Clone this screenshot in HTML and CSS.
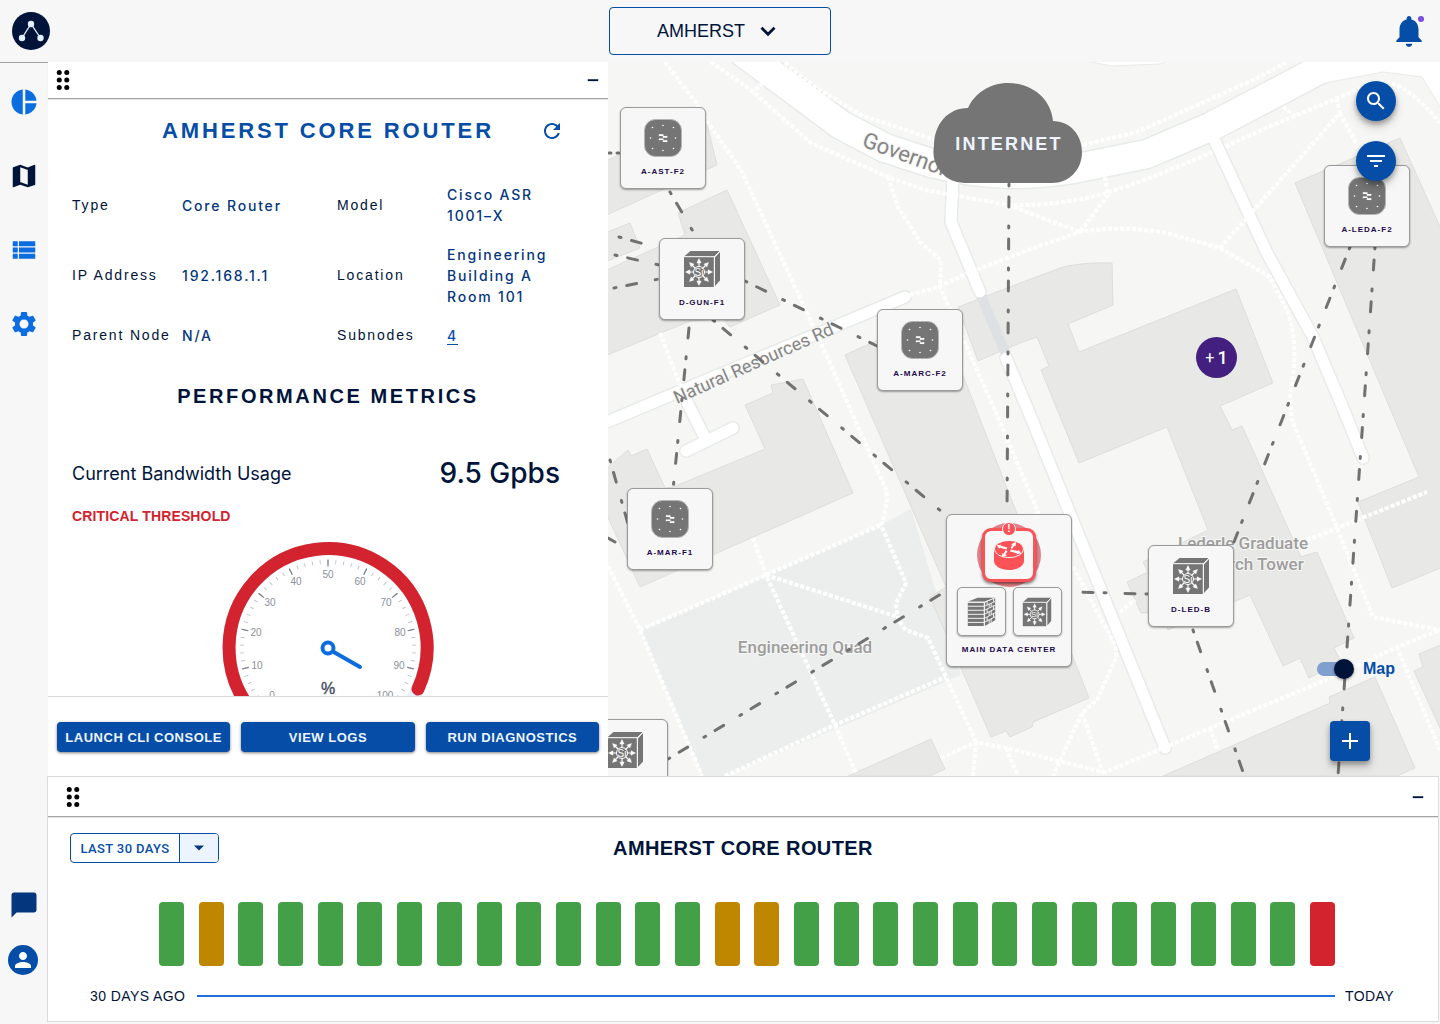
FILE: index.html
```html
<!DOCTYPE html>
<html lang="en">
<head>
<meta charset="utf-8">
<meta name="viewport" content="width=device-width, initial-scale=1">
<title>Amherst network map</title>
<link rel="stylesheet" href="styles.css">
</head>
<body>
<svg class="sprite" aria-hidden="true">
  <symbol id="drag" viewBox="0 0 24 24"><circle cx="9" cy="6" r="2"/><circle cx="15" cy="6" r="2"/><circle cx="9" cy="12" r="2"/><circle cx="15" cy="12" r="2"/><circle cx="9" cy="18" r="2"/><circle cx="15" cy="18" r="2"/></symbol>
  <symbol id="minus" viewBox="0 0 24 24"><path d="M5 11h14v2.500H5z"/></symbol>
  <symbol id="access" viewBox="0 0 38 38">
    <rect x="0.500" y="0.500" width="37" height="37" rx="11" fill="#757575" stroke="#b5b5b5"/>
    <g fill="#fff"><circle cx="19" cy="6.500" r=".8"/><circle cx="19" cy="31.500" r=".8"/><circle cx="6.500" cy="19" r=".8"/><circle cx="31.500" cy="19" r=".8"/><circle cx="8.500" cy="8.500" r=".8"/><circle cx="29.500" cy="8.500" r=".8"/><circle cx="8.500" cy="29.500" r=".8"/><circle cx="29.500" cy="29.500" r=".8"/>
    <path d="M14.500 16l1.500-1.200v.5h3.500v1.600h-3.500v.6zM14.500 20.200l1.500-1.200v.5h3.500v1.600h-3.500v.6zM23.800 17.800l-1.500-1.200v.5h-3.500v1.600h3.500v.6zM23.800 22l-1.500-1.200v.5h-3.500v1.600h3.500v.6z"/></g>
  </symbol>
  <symbol id="layer3" viewBox="-1 -1 38 38">
    <path d="M0 5.500L6.500 0H36l-5.500 5.500z M31 6.500L36 1v28.500L31 35z" fill="#757575"/>
    <path d="M0 6h30v30H0z" fill="#757575"/>
    <path d="M0 5.700h30.300V36M30.300 5.700L36 0" fill="none" stroke="#f7f7f8"/>
    <g fill="#fff" stroke="#fff">
      <path d="M15 11v20M5 21h20M8 14l14 14M22 14L8 28" stroke-width="1.200"/>
      <path d="M15 7.500l2.200 4.500h-4.400zM15 34.500l2.200-4.500h-4.400zM1.500 21l4.500-2.200v4.400zM28.500 21l-4.500-2.200v4.400zM5.500 11.500l4.600 1.600-3 3zM24.500 11.500l-1.600 4.600-3-3zM5.500 30.500l1.600-4.600 3 3zM24.500 30.500l-4.600-1.600 3-3z" stroke-width=".4"/>
    </g>
    <circle cx="15" cy="21" r="5.500" fill="#757575" stroke="#fff"/>
    <text x="15" y="24.500" text-anchor="middle" class="si">Si</text>
  </symbol>
  <symbol id="firewall" viewBox="0 0 36 36">
    <path d="M1 6L13 1h22L22 6z M1 7h20v29H1z M22 7l13-6v28L22 36z" fill="#757575"/>
    <path d="M1 6.500h20.500M1 11.500h20.500M1 16.500h20.500M1 21.500h20.500M1 26.500h20.500M1 31.500h20.500M21.500 6.500V36M21.500 6.500L35 1M21.500 11.500L35 5.500M21.500 16.500L35 10M21.500 21.500L35 14.500M21.500 26.500L35 19.500M21.500 31.500L35 24.500M25 5.500v4.500M30 8v4M25 15v4.500M30 17v4.500M25 25v4.500M30 27v4.500M33 2v4M27.500 9v4M33 11v4.500M27.500 18v5M33 21v4.500M27.500 28v5" stroke="#f7f7f8" stroke-width="1.200" fill="none"/>
  </symbol>
  <symbol id="router" viewBox="0 0 30 30">
    <path d="M0 9v12c0 5 7 9 15 9s15-4 15-9V9z" fill="#fb5258"/>
    <ellipse cx="15" cy="9" rx="14.600" ry="8.600" fill="#fb5258" stroke="#f7f7f8"/>
    <g fill="#fff"><path d="M12.500 9.500L6 7.700l-.8 1L2.800 5.200 7.500 4.700l-.8 1 6.600 1.800zM16.500 8l2-3.300-1.500-.5 5-2.200-.3 4.200-1.400-.5-2 3zM13.500 11l-2 3.700 1.500.5-5 2 .2-4 1.400.5 1.900-3.500zM16.800 9.500l7.200 1.600.7-1 2.600 3.500-5 .7.700-1-7-1.700z"/></g>
  </symbol>
</svg>

<header class="topbar">
  <a class="logo" href="#" aria-label="Home"><svg viewBox="0 0 38 38" width="38" height="38"><circle cx="19" cy="19" r="19" fill="#00143a"/><path d="M10 26L19 12l9.500 14" fill="none" stroke="#e6f1ff" stroke-width="1.300"/><g fill="#e6f1ff"><circle cx="19" cy="12" r="3.200"/><circle cx="10" cy="26" r="3.200"/><circle cx="28.500" cy="26" r="3.200"/></g></svg></a>
  <label class="site">
    <select aria-label="Site"><option>AMHERST</option></select>
    <svg viewBox="0 0 24 24" width="24" height="24"><path d="M5.500 8.800L12 15.300l6.500-6.500" fill="none" stroke="#00143a" stroke-width="2.800"/></svg>
  </label>
  <button class="bell" aria-label="Notifications">
    <svg viewBox="0 0 24 24" width="38" height="38"><path d="M12 22c1.100 0 2-.9 2-2h-4c0 1.100.9 2 2 2zm6-6v-5c0-3.070-1.630-5.640-4.500-6.320V4c0-.83-.67-1.500-1.500-1.500s-1.500.67-1.500 1.500v.68C7.640 5.360 6 7.920 6 11v5l-2 2v1h16v-1l-2-2z"/></svg>
    <span class="dot"></span>
  </button>
</header>

<div class="shell">
  <nav class="rail" aria-label="Main">
    <a href="#" aria-label="Dashboard"><svg viewBox="0 0 24 24"><path d="M11 2v20c-5.070-.5-9-4.790-9-10s3.930-9.500 9-10zm2.030 0v8.990H22c-.47-4.740-4.240-8.520-8.970-8.990zm0 11.010V22c4.740-.47 8.500-4.250 8.970-8.990h-8.970z"/></svg></a>
    <a href="#" aria-label="Map" class="current"><svg viewBox="0 0 24 24"><path d="M20.500 3l-.16.030L15 5.100 9 3 3.360 4.900c-.21.070-.36.250-.36.480V20.500c0 .28.220.5.500.5l.16-.03L9 18.900l6 2.100 5.640-1.900c.21-.07.36-.25.36-.48V3.500c0-.28-.22-.5-.5-.5zM15 19l-6-2.110V5l6 2.110V19z"/></svg></a>
    <a href="#" aria-label="List"><svg viewBox="0 0 24 24"><path d="M3 14h4v-4H3v4zm0 5h4v-4H3v4zM3 9h4V5H3v4zm5 5h13v-4H8v4zm0 5h13v-4H8v4zM8 5v4h13V5H8z"/></svg></a>
    <a href="#" aria-label="Settings"><svg viewBox="0 0 24 24"><path d="M19.140 12.940c.04-.3.060-.61.060-.94 0-.32-.02-.64-.07-.94l2.030-1.580c.18-.14.230-.41.120-.61l-1.920-3.320c-.12-.22-.37-.29-.59-.22l-2.390.96c-.5-.38-1.030-.7-1.620-.94l-.36-2.540c-.04-.24-.24-.41-.48-.41h-3.840c-.24 0-.43.170-.47.410l-.36 2.540c-.59.240-1.130.570-1.620.940l-2.390-.96c-.22-.08-.47 0-.59.220L2.740 8.870c-.12.210-.08.470.12.610l2.030 1.580c-.05.3-.09.630-.09.940s.02.640.07.940l-2.030 1.580c-.18.140-.23.410-.12.610l1.920 3.320c.12.220.37.290.59.220l2.390-.96c.5.380 1.030.7 1.620.940l.36 2.540c.05.240.24.410.48.410h3.840c.24 0 .44-.17.470-.41l.36-2.540c.59-.24 1.130-.56 1.620-.94l2.390.96c.22.080.47 0 .59-.22l1.920-3.320c.12-.22.070-.47-.12-.61l-2.010-1.580zM12 15.600c-1.980 0-3.600-1.620-3.600-3.600s1.620-3.600 3.600-3.600 3.600 1.620 3.600 3.600-1.620 3.600-3.600 3.600z"/></svg></a>
    <a href="#" aria-label="Messages" class="chat"><svg viewBox="0 0 24 24"><path d="M20 2H4c-1.100 0-2 .9-2 2v18l4-4h14c1.100 0 2-.9 2-2V4c0-1.100-.9-2-2-2z"/></svg></a>
    <a href="#" aria-label="Account" class="account"><svg viewBox="0 0 30 30"><circle cx="15" cy="15" r="15" fill="#054da7"/><path d="M15 15c2.210 0 4-1.790 4-4s-1.790-4-4-4-4 1.790-4 4 1.790 4 4 4zm0 2c-2.670 0-8 1.340-8 4v2h16v-2c0-2.660-5.330-4-8-4z" fill="#fff"/></svg></a>
  </nav>

  <main class="main">
    <div class="work">
      <section class="details" aria-label="Amherst core router">
        <div class="bar">
          <button class="icon" aria-label="Move panel"><svg width="30" height="30"><use href="#drag"/></svg></button>
          <button class="icon" aria-label="Minimise panel"><svg width="18" height="18"><use href="#minus"/></svg></button>
        </div>
        <div class="scroll">
          <div class="title">
            <h1>AMHERST CORE ROUTER</h1>
            <button class="icon refresh" aria-label="Refresh"><svg viewBox="0 0 24 24" width="24" height="24"><path d="M17.650 6.350C16.200 4.900 14.210 4 12 4c-4.420 0-7.990 3.580-8 8s3.570 8 8 8c3.730 0 6.840-2.550 7.730-6h-2.080c-.82 2.330-3.040 4-5.650 4-3.310 0-6-2.690-6-6s2.690-6 6-6c1.660 0 3.140.69 4.220 1.780L13 11h7V4l-2.350 2.350z"/></svg></button>
          </div>
          <dl class="facts">
            <dt>Type</dt><dd>Core Router</dd><dt>Model</dt><dd>Cisco ASR<br>1001–X</dd>
            <dt>IP Address</dt><dd>192.168.1.1</dd><dt>Location</dt><dd>Engineering<br>Building A<br>Room 101</dd>
            <dt>Parent Node</dt><dd>N/A</dd><dt>Subnodes</dt><dd><a href="#">4</a></dd>
          </dl>
          <h2>PERFORMANCE METRICS</h2>
          <div class="usage"><span>Current Bandwidth Usage</span><strong>9.5 Gpbs</strong></div>
          <p class="critical">CRITICAL THRESHOLD</p>
          <svg class="gauge" viewBox="-110 -110 220 190" width="220" height="190" role="img" aria-label="94 percent">
            <g fill="none">
              <path d="M-76 63A99 99 0 1 1 76 63" stroke="#e6f1fc" stroke-width="13" stroke-linecap="round"/>
              <path d="M-76 63A99 99 0 1 1 90 41" stroke="#d2232e" stroke-width="13" stroke-linecap="round"/>
              <path d="M-66.300 54.800A86 86 0 1 1 66.300 54.800" pathLength="100" stroke="#c0c5ce" stroke-width="4" stroke-dasharray=".25 1.750" stroke-dashoffset=".125"/>
              <path d="M-65.500 54.200A85 85 0 1 1 65.500 54.200" pathLength="100" stroke="#747b89" stroke-width="7" stroke-dasharray=".3 9.700" stroke-dashoffset=".15"/>
              <path d="M4 3L32 19" stroke="#0b6de0" stroke-width="4" stroke-linecap="round"/>
              <circle r="5.500" fill="#fff" stroke="#0b6de0" stroke-width="4"/>
            </g>
            <g class="scale"><text x="-56" y="51">0</text><text x="-71" y="21">10</text><text x="-72" y="-12">20</text><text x="-58" y="-42">30</text><text x="-32" y="-63">40</text><text x="0" y="-70">50</text><text x="32" y="-63">60</text><text x="58" y="-42">70</text><text x="72" y="-12">80</text><text x="71" y="21">90</text><text x="57" y="51">100</text></g>
            <text class="unit" x="0" y="46">%</text>
          </svg>
        </div>
        <div class="actions"><button>LAUNCH CLI CONSOLE</button><button>VIEW LOGS</button><button>RUN DIAGNOSTICS</button></div>
      </section>

      <section class="map" aria-label="Network map">
        <svg class="ground" viewBox="608 62 832 714" width="832" height="714">
          <g fill="#e8e8e6" stroke="#dededc">
            <path d="M600 163L706 120 717 165 600 218zM600 235L630 223 640 248 600 264zM600 273L685 235 678 213 727 190 780 305 730 327 724 319 690 321 600 358z"/>
            <path d="M600 474L628 450 631 456 647 449 665 488 673 487 765 449 745 405 773 393 771 385 803 379 853 493 640 587 600 500z"/>
            <path d="M958 307L1028 280 1063 267Q1085 262 1112 263L1113 305 1068 324 1079 352 1236 289 1273 383 1220 406 1232 430 1242 426 1301 557 1317 552 1354 638 1334 648 1341 662 1309 678 1300 658 1283 666 1250 595 1168 630 1160 612 1141 613 1127 582 1148 572 1143 562 1208 530 1167 427 1079 463 1041 370 1049 366 1037 337 1020 343 978 361z"/>
            <path d="M1295 183L1400 138 1450 249V564L1392 588 1358 502 1419 477z"/>
            <path d="M1163 776L1330 703 1329 697 1375 677 1415 768 1397 776zM1450 641L1419 654 1423 667 1414 671 1450 750zM848 776L931 739 945 769 930 776z"/>
          </g>
          <path d="M641 630L881 525 911 509 961 675 725 776H703z" fill="#ebeeed"/>
          <path d="M845 355L900 330 955 355 1089 698 1033 722 1032 727 1010 737 1006 731 991 737 930 597 946 587z" fill="#e8e8e6" stroke="#dededc"/>
          <g fill="none" stroke="#e7ecea" stroke-linecap="round" stroke-linejoin="round">
            <path d="M735 46L756 62 841 125 885 148 931 163Q970 173 1010 174 1050 174 1083 167L1147 154 1210 127 1260 101 1330 64" stroke-width="31"/>
            <path d="M953 176L951 222 980 292M1006 358L1028 410 1165 748M1213 137L1267 253 1313 337 1345 413 1363 458" stroke-width="14"/>
            <path d="M905 297L590 429M686 400L706 440M686 451L733 428" stroke-width="14"/>
          </g>
          <path d="M981 296L1006 354" stroke="#dde1e3" stroke-width="10"/>
          <path d="M1300 60L1325 83 1383 72 1422 77 1442 110V60z" fill="#fff" stroke="#e7ecea"/>
          <path d="M1080 60L1112 66 1160 64 1168 60z" fill="#fff" stroke="#e7ecea"/>
          <g fill="none" stroke="#fff" stroke-linecap="round" stroke-linejoin="round">
            <path d="M735 46L756 62 841 125 885 148 931 163Q970 173 1010 174 1050 174 1083 167L1147 154 1210 127 1260 101 1330 64" stroke-width="28"/>
            <path d="M953 176L951 222 980 292M1006 358L1028 410 1165 748M1213 137L1267 253 1313 337 1345 413 1363 458" stroke-width="11"/>
            <path d="M905 297L590 429M686 400L706 440M686 451L733 428" stroke-width="11"/>
          </g>
          <g fill="none" stroke="#fff" stroke-width="4" stroke-dasharray="4 2" stroke-linejoin="round">
            <path d="M665 62L696 103 711 127 741 170 795 287 821 343 855 420 885 487Q890 500 881 525L906 583 896 603Q896 620 906 630L928 638 946 677 976 742"/>
            <path d="M711 62L751 90 811 143 888 177 925 190 1008 205Q1060 206 1107 193L1150 178 1213 152 1273 125 1333 100 1370 83Q1400 74 1440 123M763 83L751 93"/>
            <path d="M785 63L815 87 861 115 935 140M1083 145L1137 132 1193 107 1253 80 1287 62"/>
            <path d="M888 177L898 207 921 243 941 260 940 287 965 343 998 417 1040 517 1073 567 1103 623Q1120 650 1115 660L1097 700 1082 713 1053 776"/>
            <path d="M910 295L938 287 968 273 1028 250 1080 232Q1120 225 1167 233L1220 248 1270 277 1287 310Q1300 345 1290 393L1292 420 1337 528 1373 617 1440 630"/>
            <path d="M1008 205L1080 232M1105 177L1108 195 1080 232M1220 248L1340 113 1337 100M1340 113L1357 145M1283 107L1295 116"/>
            <path d="M640 630L766 575 881 525M753 538L766 575 835 725 856 773M766 575L898 617M600 550L640 630 702 776M725 776L835 725 946 677"/>
            <path d="M941 758L976 742 1006 748 1103 772M976 742L973 776M1006 748L1018 776M1103 773L1163 748 1237 717 1333 677 1397 647 1440 630M1397 647L1440 750"/>
            <path d="M1307 540L1337 528 1427 492M1120 612L1135 600M1082 713L1103 772M660 333L683 393M1210 728L1218 750"/>
          </g>
          <g class="place">
            <text x="861" y="146" transform="rotate(20 861 146)" class="avenue">Governors</text>
            <text x="677" y="404" transform="rotate(-24 677 404)" class="street">Natural Resources Rd</text>
            <text x="805" y="653" text-anchor="middle">Engineering Quad</text>
            <text x="1243" y="549" text-anchor="middle">Lederle Graduate</text>
            <text x="1243" y="570" text-anchor="middle">Research Tower</text>
          </g>
          <g fill="none" stroke="#717171" stroke-width="3" stroke-linecap="round" stroke-dasharray="10 19 2 11" stroke-dashoffset="29">
            <path d="M1009 184L1007 514M670 192L698 240M745 281L877 346M713 320L948 517M619 237L659 248M615 255L659 265M614 288L659 279M668 759L946 591M1148 594L1074 592M1350 247L1232 547M1375 247L1338 776M1193 630L1243 772M610 460L628 524M609 153H613M617 153H622"/>
            <path d="M689 328L673 490" stroke-dashoffset="0"/>
            <path d="M608 538L615 542" stroke-dashoffset="0"/>
          </g>
          <path d="M965 183a31 31 0 0 1-31-37c0-22 14-38 34-38 7-15 22-25 40-25 24 0 43 16 45 38 17 0 29 14 29 31 0 18-13 31-30 31z" fill="#757575"/>
          <text x="1009" y="150" text-anchor="middle" class="internet">INTERNET</text>
        </svg>

        <button class="node n-ast"><svg><use href="#access"/></svg>A-AST-F2</button>
        <button class="node n-gun"><svg><use href="#layer3"/></svg>D-GUN-F1</button>
        <button class="node n-marc"><svg><use href="#access"/></svg>A-MARC-F2</button>
        <button class="node n-leda"><svg><use href="#access"/></svg>A-LEDA-F2</button>
        <button class="node n-mar"><svg><use href="#access"/></svg>A-MAR-F1</button>
        <button class="node n-led"><svg><use href="#layer3"/></svg>D-LED-B</button>
        <button class="node n-edge" aria-label="Distribution switch"><svg><use href="#layer3"/></svg></button>
        <button class="cluster"><span>+</span>1</button>

        <div class="node center">
          <button class="alert" aria-label="Core router, critical"><svg width="30" height="30"><use href="#router"/></svg><span class="flag">!</span></button>
          <div class="pair">
            <button aria-label="Firewall"><svg width="29" height="29"><use href="#firewall"/></svg></button>
            <button aria-label="Core switch"><svg width="30" height="30"><use href="#layer3"/></svg></button>
          </div>
          MAIN DATA CENTER
        </div>

        <div class="tools">
          <button aria-label="Search"><svg viewBox="0 0 24 24" width="24" height="24"><path d="M15.500 14h-.79l-.28-.27C15.410 12.590 16 11.110 16 9.500 16 5.910 13.090 3 9.500 3S3 5.910 3 9.500 5.910 16 9.500 16c1.610 0 3.090-.59 4.230-1.570l.27.280v.79l5 4.990L20.490 19l-4.990-5zm-6 0C7.010 14 5 11.990 5 9.500S7.010 5 9.500 5 14 7.010 14 9.500 11.990 14 9.500 14z"/></svg></button>
          <button aria-label="Filter"><svg viewBox="0 0 24 24" width="24" height="24"><path d="M10 18h4v-2h-4v2zM3 6v2h18V6H3zm3 7h12v-2H6v2z"/></svg></button>
        </div>
        <div class="corner">
          <label class="toggle"><input type="checkbox" checked>Map</label>
          <button class="add" aria-label="Add node"><svg viewBox="0 0 24 24" width="24" height="24"><path d="M11 4h2v7h7v2h-7v7h-2v-7H4v-2h7z"/></svg></button>
        </div>
      </section>
    </div>

    <section class="history" aria-label="Status history">
      <div class="bar">
        <button class="icon" aria-label="Move panel"><svg width="30" height="30"><use href="#drag"/></svg></button>
        <button class="icon" aria-label="Minimise panel"><svg width="18" height="18"><use href="#minus"/></svg></button>
      </div>
      <div class="heading">
        <div class="split"><button>LAST 30 DAYS</button><button aria-label="Choose period"><svg viewBox="0 0 24 24" width="20" height="20"><path d="M6 9l6 6 6-6z"/></svg></button></div>
        <h2>AMHERST CORE ROUTER</h2>
      </div>
      <div class="days" role="img" aria-label="Status for each of the last 30 days">
        <i></i><i class="warn"></i><i></i><i></i><i></i><i></i><i></i><i></i><i></i><i></i><i></i><i></i><i></i><i></i><i class="warn"></i><i class="warn"></i><i></i><i></i><i></i><i></i><i></i><i></i><i></i><i></i><i></i><i></i><i></i><i></i><i></i><i class="bad"></i>
      </div>
      <div class="axis"><span>30 DAYS AGO</span><hr><span>TODAY</span></div>
    </section>
  </main>
</div>
</body>
</html>
```
FILE: styles.css
```css
* { box-sizing: border-box; }
body {
  margin: 0;
  height: 100vh;
  display: flex;
  flex-direction: column;
  background: #f7f7f8;
  color: #00143a;
  font-family: "Liberation Sans", Arial, sans-serif;
}
button, select { font: inherit; color: inherit; cursor: pointer; }
button { border: 0; padding: 0; background: none; }
svg { display: block; flex: none; }
h1, h2, p, dl, dd { margin: 0; }
.sprite { position: absolute; width: 0; height: 0; }
.si { font: 10px "Liberation Sans", Arial, sans-serif; letter-spacing: 0; fill: #fff; }

/* Top bar */
.topbar {
  height: 62px;
  flex: none;
  display: grid;
  grid-template-columns: 1fr auto 1fr;
  align-items: center;
  padding: 0 12px;
}
.site { display: grid; align-items: center; }
.site select, .site svg { grid-area: 1 / 1; }
.site select {
  appearance: none;
  width: 222px;
  height: 48px;
  padding: 0 47px;
  border: 1px solid #054da7;
  border-radius: 4px;
  background: transparent;
  font-size: 18px;
}
.site svg { justify-self: end; margin-right: 51px; pointer-events: none; }
.bell { position: relative; justify-self: end; fill: #054da7; }
.dot {
  position: absolute;
  top: 4px;
  right: 4px;
  width: 6px;
  height: 6px;
  border-radius: 50%;
  background: #7d4be0;
}

/* Shell */
.shell { flex: 1; min-height: 0; display: flex; }
.rail {
  width: 48px;
  flex: none;
  display: flex;
  flex-direction: column;
  align-items: center;
  gap: 44px;
  padding: 24px 0 49px;
  border-top: 1px solid #a0a0a0;
}
.rail svg { width: 30px; height: 30px; fill: #0b6de0; }
.rail .current svg { fill: #00143a; }
.rail .chat { margin-top: auto; }
.rail .chat svg { fill: #04367d; }
.rail .account { margin: -19px 2px 0 0; }
.main { flex: 1; min-width: 0; display: flex; flex-direction: column; }
.work { flex: 1; min-height: 0; display: flex; }

/* Panels */
.bar {
  display: flex;
  align-items: center;
  justify-content: space-between;
  flex: none;
  border-bottom: 1px solid #a4a4a4;
  box-shadow: 0 1px 1px #e4e4e4;
}
.icon svg { fill: #00143a; }
.icon:first-child svg { fill: #000; }
.details {
  width: 560px;
  flex: none;
  display: flex;
  flex-direction: column;
  background: #fff;
}
.details .bar { height: 37px; padding: 0 6px 0 0; }
.scroll {
  flex: 1;
  min-height: 0;
  overflow-y: auto;
  scrollbar-width: none;
  padding: 16px 24px 24px;
}
.title { display: grid; grid-template-columns: 1fr auto 1fr; align-items: center; height: 32px; }
.title h1 { grid-column: 2; color: #054da7; font-size: 22px; letter-spacing: 0.13em; }
.title .refresh { justify-self: end; margin-right: 20px; }
.title .refresh svg { width: 24px; height: 24px; fill: #054da7; }
.facts {
  display: grid;
  grid-template-columns: 110px 155px 110px 1fr;
  align-items: center;
  row-gap: 18px;
  margin-top: 37px;
  font-size: 14px;
  line-height: 21px;
  white-space: nowrap;
}
.facts dt { letter-spacing: 0.13em; }
.facts dd { color: #04367d; font-family: Inter, sans-serif; font-weight: 500; letter-spacing: 0.13em; }
.facts a { color: #054da7; text-underline-offset: 3px; }
.details h2 { margin-top: 38px; text-align: center; font-size: 20px; line-height: 24px; letter-spacing: 0.13em; }
.usage {
  display: flex;
  align-items: center;
  justify-content: space-between;
  margin-top: 47px;
  padding-right: 24px;
  height: 36px;
  font-family: Inter, sans-serif;
  font-size: 18px;
}
.usage strong { font-size: 28px; font-weight: 500; }
.critical { margin-top: 17px; color: #d2232e; font-size: 14px; line-height: 16px; font-weight: bold; letter-spacing: 0.01em; }
.gauge { margin: 14px auto 0; }
.scale text { font-size: 10px; fill: #8a8f99; text-anchor: middle; }
.unit { font-size: 16px; fill: #464d60; text-anchor: middle; stroke: #464d60; stroke-width: .4; }
.actions {
  flex: none;
  display: flex;
  gap: 11px;
  padding: 25px 9px 24px;
  border-top: 1px solid #dadada;
}
.actions button {
  flex: 1;
  height: 30px;
  border-radius: 4px;
  background: #054da7;
  color: #eef5ff;
  font-size: 13px;
  font-weight: bold;
  letter-spacing: 0.04em;
  box-shadow: 0 1px 3px rgba(0, 0, 0, .5);
}

/* Map canvas */
.map { position: relative; flex: 1; min-width: 0; overflow: hidden; background: #f6f6f4; }
.place text {
  font: 500 17px Roboto, sans-serif;
  fill: #9d9d9d;
  stroke: #f6f6f4;
  stroke-width: 2px;
  paint-order: stroke;
}
.place .street { font-size: 18px; font-weight: 400; fill: #858585; }
.place .avenue { font-size: 22px; font-weight: 400; fill: #858585; }
.internet { font-size: 18px; font-weight: bold; letter-spacing: 0.12em; fill: #eef5ff; }
.node {
  position: absolute;
  display: flex;
  flex-direction: column;
  align-items: center;
  gap: 10px;
  width: 86px;
  height: 82px;
  padding-top: 11px;
  border: 1px solid #9a9a9a;
  border-radius: 6px;
  background: #f7f7f8;
  box-shadow: 0 1px 2px rgba(0, 0, 0, .35);
  color: #1d0a4a;
  font-size: 8px;
  font-weight: bold;
  letter-spacing: 1px;
}
.node > svg { width: 38px; height: 38px; }
.n-ast { left: 12px; top: 45px; }
.n-gun { left: 51px; top: 176px; }
.n-marc { left: 269px; top: 247px; }
.n-leda { left: 716px; top: 103px; }
.n-mar { left: 19px; top: 426px; }
.n-led { left: 540px; top: 483px; }
.n-edge { left: -26px; top: 657px; }
.center { isolation: isolate; left: 338px; top: 452px; width: 126px; height: 153px; gap: 9px; padding-top: 13px; }
.alert {
  position: relative;
  width: 54px;
  height: 54px;
  display: grid;
  place-items: center;
  border: 3px solid #fb5258;
  border-radius: 9px;
  background: #f7f7f8;
  box-shadow: 0 2px 3px rgba(0, 0, 0, .5);
}
.alert::before {
  content: "";
  position: absolute;
  inset: -8px;
  z-index: -1;
  border-radius: 50%;
  background: #e48088;
}
.flag {
  position: absolute;
  top: -9px;
  width: 14px;
  height: 14px;
  border: 1px solid #f7f7f8;
  border-radius: 50%;
  background: #fb5258;
  color: #fff;
  font-size: 10px;
  line-height: 12px;
  letter-spacing: 0;
}
.pair { display: flex; gap: 7px; margin-top: -4px; }
.pair button {
  width: 49px;
  height: 49px;
  display: grid;
  place-items: center;
  border: 1px solid #9a9a9a;
  border-radius: 5px;
  background: #f7f7f8;
  box-shadow: 0 1px 2px rgba(0, 0, 0, .35);
}
.cluster {
  position: absolute;
  left: 588px;
  top: 275px;
  width: 41px;
  height: 41px;
  display: flex;
  align-items: center;
  justify-content: center;
  gap: 3px;
  border-radius: 50%;
  background: #43207f;
  color: #fff;
  font: 500 18px Roboto, sans-serif;
}
.cluster span { font-size: 16px; font-weight: 400; }
.tools, .corner { position: absolute; display: flex; flex-direction: column; gap: 20px; }
.tools { top: 19px; right: 44px; }
.tools button, .add {
  width: 40px;
  height: 40px;
  display: grid;
  place-items: center;
  border-radius: 50%;
  background: #054da7;
  fill: #fff;
  box-shadow: 0 3px 5px rgba(0, 0, 0, .3), 0 6px 10px rgba(0, 0, 0, .16);
}
.corner { right: 45px; bottom: 15px; gap: 40px; }
.add { border-radius: 4px; margin-left: 13px; }
.toggle {
  display: flex;
  align-items: center;
  gap: 9px;
  height: 24px;
  color: #054da7;
  font-size: 16px;
  font-weight: bold;
}
.toggle input {
  appearance: none;
  display: flex;
  align-items: center;
  justify-content: flex-end;
  position: relative;
  width: 37px;
  height: 20px;
  margin: 0;
}
.toggle input::before {
  content: "";
  position: absolute;
  inset: 3px 3px 3px 0;
  border-radius: 7px;
  background: #7f9fcf;
}
.toggle input::after {
  content: "";
  position: relative;
  width: 20px;
  height: 20px;
  border-radius: 50%;
  background: #00143a;
  box-shadow: 0 1px 3px rgba(0, 0, 0, .4);
}

/* History panel */
.history {
  flex: none;
  margin: 0 1px 2px -1px;
  border: 1px solid #dadada;
  background: #fff;
  position: relative;
}
.history .bar { height: 40px; padding: 0 11px 0 10px; }
.heading {
  display: grid;
  grid-template-columns: 1fr auto 1fr;
  align-items: center;
  padding: 16px 22px 0;
}
.heading h2 { font-size: 20px; letter-spacing: 0.02em; }
.split { display: flex; width: 149px; height: 30px; border: 1px solid #054da7; border-radius: 4px; overflow: hidden; }
.split button { flex: 1; color: #054da7; font: 500 13px Roboto, sans-serif; letter-spacing: 0.03em; }
.split button + button {
  flex: 0 0 39px;
  display: grid;
  place-items: center;
  border-left: 1px solid #054da7;
  background: #ebf4ff;
  fill: #04367d;
}
.days { display: flex; justify-content: space-between; height: 64px; margin: 39px 103px 0 111px; }
.days i { width: 25px; border-radius: 4px; background: #44a047; }
.days .warn { background: #bf8700; }
.days .bad { background: #d2232e; }
.axis {
  display: flex;
  align-items: center;
  padding: 22px 44px 17px 42px;
  font-size: 14px;
  line-height: 16px;
  letter-spacing: 0.03em;
}
.axis hr { flex: 1; height: 2px; margin: 0 10px 0 12px; border: 0; background: #1f6fdb; }
```
